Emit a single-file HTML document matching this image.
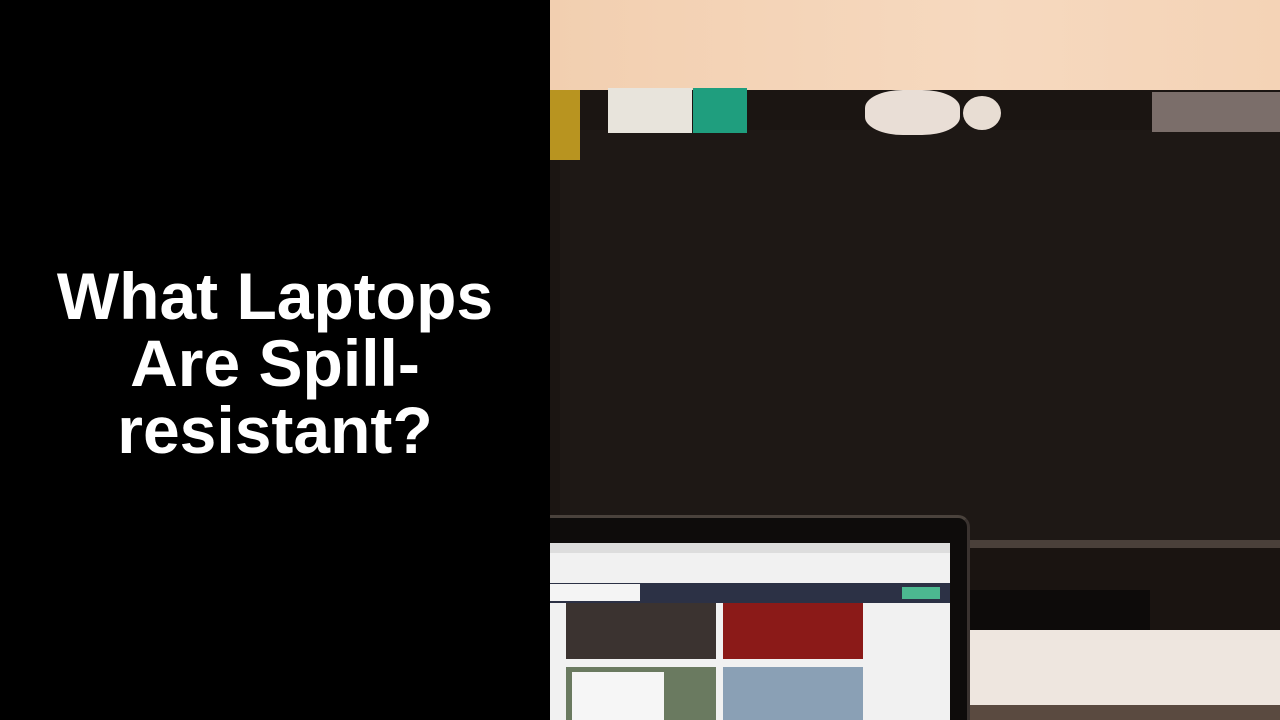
<!DOCTYPE html>
<html><head><meta charset="utf-8"><style>
*{margin:0;padding:0;box-sizing:border-box}
body{width:1280px;height:720px;overflow:hidden;position:relative;background:#000;font-family:"Liberation Sans",sans-serif}
.left{position:absolute;left:0;top:0;width:550px;height:720px;background:#000;display:flex;align-items:center;justify-content:center}
.left h1{color:#fff;font-size:66px;font-weight:bold;text-align:center;line-height:67px;width:500px;margin-top:6px}
.r{position:absolute}
</style></head><body>
<div class="left"><h1>What Laptops Are Spill-resistant?</h1></div>
<div class="r" style="left:550px;top:0;width:730px;height:720px;background:#1a1411"></div>
<div class="r" style="left:550px;top:0;width:730px;height:92px;background:linear-gradient(90deg,#f2cfb0,#f6d9bf 60%,#f4d3b6)"></div>
<div class="r" style="left:550px;top:90px;width:730px;height:450px;background:#1b1512"></div>
<div class="r" style="left:560px;top:130px;width:720px;height:410px;background:#1e1815"></div>
<div class="r" style="left:608px;top:88px;width:84px;height:45px;background:#e8e4dc"></div>
<div class="r" style="left:693px;top:88px;width:54px;height:45px;background:#1f9e7e"></div>
<div class="r" style="left:865px;top:90px;width:95px;height:45px;background:#e9ded6;border-radius:40%"></div>
<div class="r" style="left:963px;top:96px;width:38px;height:34px;background:#e8ddd3;border-radius:50%"></div>
<div class="r" style="left:1152px;top:92px;width:128px;height:40px;background:#7b6e6a"></div>
<div class="r" style="left:550px;top:90px;width:30px;height:70px;background:#b89420"></div>
<div class="r" style="left:970px;top:540px;width:310px;height:8px;background:#4a403a"></div>
<div class="r" style="left:970px;top:590px;width:180px;height:55px;background:#0d0b0a"></div>
<div class="r" style="left:970px;top:630px;width:310px;height:75px;background:#eee6df"></div>
<div class="r" style="left:970px;top:705px;width:310px;height:15px;background:#5a4a40"></div>
<div class="r" style="left:550px;top:515px;width:420px;height:205px;background:#0e0c0b;border-top:3px solid #4a423c;border-right:3px solid #3a3330;border-radius:0 12px 0 0"></div>
<div class="r" style="left:550px;top:543px;width:400px;height:177px;background:#f1f1f1"></div>
<div class="r" style="left:550px;top:543px;width:400px;height:10px;background:#ddd"></div>
<div class="r" style="left:550px;top:583px;width:400px;height:20px;background:#2c3145"></div>
<div class="r" style="left:550px;top:584px;width:90px;height:17px;background:#f4f4f4"></div>
<div class="r" style="left:902px;top:587px;width:38px;height:12px;background:#4cb890"></div>
<div class="r" style="left:566px;top:603px;width:150px;height:56px;background:#3b3330"></div>
<div class="r" style="left:723px;top:603px;width:140px;height:56px;background:#8b1a18"></div>
<div class="r" style="left:566px;top:667px;width:150px;height:53px;background:#6a7a60"></div>
<div class="r" style="left:572px;top:672px;width:92px;height:48px;background:#f6f6f6"></div>
<div class="r" style="left:723px;top:667px;width:140px;height:53px;background:#8aa0b5"></div>
</body></html>
